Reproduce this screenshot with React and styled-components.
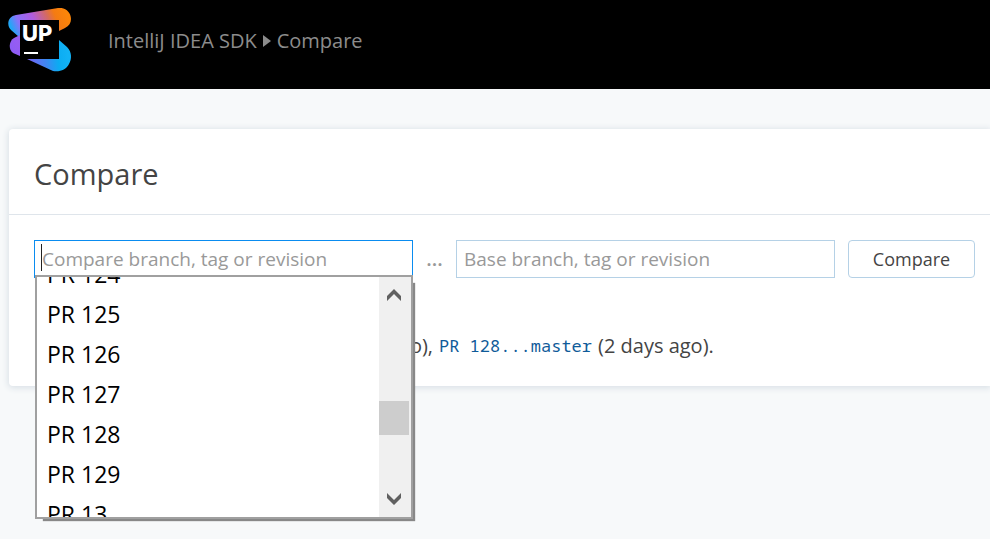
import React from "react";
import styled, { createGlobalStyle } from "styled-components";

const GlobalStyle = createGlobalStyle`
  *, *::before, *::after { box-sizing: border-box; }
  body { margin: 0; }
`;

const Page = styled.div`
  min-height: 100vh;
  background: #f7f9fa;
  color: #444;
  font-family: "Open Sans", "Noto Sans", sans-serif;
  font-size: 20px;
`;

const Header = styled.header`
  display: flex;
  align-items: flex-start;
  height: 89px;
  padding: 8px;
  background: #000;
`;

const LogoLink = styled.a`
  display: block;
  width: 64px;
  height: 64px;
`;

const Breadcrumbs = styled.nav`
  display: flex;
  align-items: center;
  gap: 6px;
  margin: 18px 0 0 36px;
  line-height: 30px;
  white-space: nowrap;
`;

const Crumb = styled.a`
  color: #8c8c8c;
  text-decoration: none;
`;

const Card = styled.main`
  margin: 40px 0 0 9px;
  background: #fff;
  border-radius: 4px 0 0 4px;
  box-shadow: 0 1px 6px 1px #d9e0e6;
`;

const CardHeader = styled.div`
  padding: 22px 25px 18px;
  border-bottom: 1px solid #dfe5eb;
`;

const Title = styled.h1`
  margin: 0;
  font-size: 29px;
  font-weight: 400;
  line-height: 45px;
`;

const CardBody = styled.div`
  padding: 25px 15px 25px 25px;
`;

const Form = styled.form`
  display: flex;
  align-items: stretch;
  height: 38px;
`;

const Field = styled.div`
  position: relative;
  flex: 1;
  min-width: 0;
`;

const Input = styled.input`
  display: block;
  width: 100%;
  height: 38px;
  padding: 0 7px;
  border: 1px solid ${(p) => (p.$active ? "#0a8cf0" : "#b5d1e6")};
  border-radius: 0;
  outline: 0;
  background: #fff;
  color: #444;
  font: inherit;
  font-size: 19px;
  &::placeholder { color: #999; opacity: 1; }
`;

const Caret = styled.span`
  position: absolute;
  top: 4px;
  left: 7px;
  width: 1px;
  height: 27px;
  background: #222;
`;

const Separator = styled.span`
  width: 43px;
  color: #999;
  font-weight: 600;
  line-height: 38px;
  text-align: center;
`;

const CompareButton = styled.button`
  width: 127px;
  margin-left: 13px;
  padding: 0;
  border: 1px solid #b5d1e6;
  border-radius: 4px;
  background: #fff;
  color: #444;
  font: inherit;
  font-size: 18px;
`;

const Popup = styled.div`
  position: absolute;
  z-index: 2;
  top: 35px;
  left: 1px;
  right: 0;
  display: flex;
  height: 244px;
  border: 2px solid #a0a0a0;
  background: #fff;
  box-shadow: 5px 5px 1px -3px #888;
`;

const OptionsView = styled.div`
  flex: 1;
  overflow: hidden;
`;

const Options = styled.ul`
  margin: -23px 0 0;
  padding: 0;
  list-style: none;
`;

const Option = styled.li`
  height: 40px;
  padding: 0 10px;
  color: #000;
  font-size: 23px;
  line-height: 40px;
`;

const Scrollbar = styled.div`
  display: flex;
  flex-direction: column;
  width: 32px;
  background: #f0f0f0;
`;

const ScrollButton = styled.button`
  display: flex;
  align-items: center;
  justify-content: center;
  width: 30px;
  height: 36px;
  padding: 0;
  border: 0;
  background: transparent;
`;

const Track = styled.div`
  flex: 1;
  padding-top: 88px;
`;

const Thumb = styled.div`
  width: 30px;
  height: 34px;
  background: #cdcdcd;
`;

const Recent = styled.p`
  display: flex;
  margin: 53px 0 0;
  line-height: 30px;
  white-space: pre;
`;

const Earlier = styled.span`
  width: 399px;
  text-align: right;
`;

const RevisionLink = styled.a`
  margin: 0 6px;
  color: #0f5b99;
  font-family: "Noto Sans Mono", "DejaVu Sans Mono", monospace;
  font-size: 17px;
  line-height: 30px;
  text-decoration: none;
`;

const Logo = () => (
  <svg width="64" height="64" viewBox="8 8 64 64" role="img" aria-label="Upsource">
    <defs>
      <linearGradient id="upper" x1="14" y1="34" x2="66" y2="12" gradientUnits="userSpaceOnUse">
        <stop offset="0" stopColor="#22a7f6" />
        <stop offset="0.16" stopColor="#8a72fb" />
        <stop offset="0.42" stopColor="#b05ce0" />
        <stop offset="0.66" stopColor="#d46a62" />
        <stop offset="0.8" stopColor="#f47b12" />
        <stop offset="1" stopColor="#fb8509" />
      </linearGradient>
      <linearGradient id="left" x1="10" y1="48" x2="22" y2="40" gradientUnits="userSpaceOnUse">
        <stop offset="0" stopColor="#8e5cf5" />
        <stop offset="1" stopColor="#9a5df2" />
      </linearGradient>
      <linearGradient id="lower" x1="28" y1="60" x2="68" y2="56" gradientUnits="userSpaceOnUse">
        <stop offset="0" stopColor="#7464f5" />
        <stop offset="0.45" stopColor="#3d88f2" />
        <stop offset="0.75" stopColor="#0bacf2" />
        <stop offset="1" stopColor="#12b2f5" />
      </linearGradient>
    </defs>
    <path d="M19 37L11 30C6 25 8 16 16 15L58 8C65 7 71 12 71 19C71 23 69 26 65 28L59 31V40H24Z" fill="url(#upper)" />
    <path d="M20 35L14 38C9 41 8 49 13 53L20 56H30V35Z" fill="url(#left)" />
    <path d="M59 40L67 47C72 52 72 59 69 64C66 70 60 72 53 71L27 59V52H50Z" fill="url(#lower)" />
    <path d="M20 20H59V59H20Z" fill="#000" />
    <text x="22" y="41" fill="#fff" fontFamily="Inter, sans-serif" fontSize="22" fontWeight="800">UP</text>
    <path d="M24 52H38V54H24Z" fill="#fff" />
  </svg>
);

const Arrow = ({ down }) => (
  <svg width="16" height="14" viewBox="0 0 16 14" aria-hidden="true">
    <path d={down ? "M1 1L8 8L15 1V6L8 13L1 6Z" : "M1 13L8 6L15 13V8L8 1L1 8Z"} fill="#606060" />
  </svg>
);

const branches = ["PR 124", "PR 125", "PR 126", "PR 127", "PR 128", "PR 129", "PR 13"];

export default function App() {
  return (
    <Page>
      <GlobalStyle />
      <Header>
        <LogoLink href="#"><Logo /></LogoLink>
        <Breadcrumbs aria-label="Breadcrumb">
          <Crumb href="#">IntelliJ IDEA SDK</Crumb>
          <svg width="8" height="14" viewBox="0 0 8 14" aria-hidden="true">
            <path d="M0 1L8 7L0 13Z" fill="#8c8c8c" />
          </svg>
          <Crumb href="#">Compare</Crumb>
        </Breadcrumbs>
      </Header>
      <Card>
        <CardHeader><Title>Compare</Title></CardHeader>
        <CardBody>
          <Form onSubmit={(e) => e.preventDefault()}>
            <Field>
              <Input $active aria-label="Compare branch, tag or revision" placeholder="Compare branch, tag or revision" />
              <Caret />
              <Popup>
                <OptionsView>
                  <Options role="listbox" aria-label="Branches">
                    {branches.map((name) => (
                      <Option key={name} role="option">{name}</Option>
                    ))}
                  </Options>
                </OptionsView>
                <Scrollbar>
                  <ScrollButton type="button" aria-label="Scroll up"><Arrow /></ScrollButton>
                  <Track><Thumb /></Track>
                  <ScrollButton type="button" aria-label="Scroll down"><Arrow down /></ScrollButton>
                </Scrollbar>
              </Popup>
            </Field>
            <Separator>...</Separator>
            <Field>
              <Input aria-label="Base branch, tag or revision" placeholder="Base branch, tag or revision" />
            </Field>
            <CompareButton type="submit">Compare</CompareButton>
          </Form>
          <Recent>
            <Earlier>ago),</Earlier>
            <RevisionLink href="#">PR 128...master</RevisionLink>
            <span>(2 days ago).</span>
          </Recent>
        </CardBody>
      </Card>
    </Page>
  );
}
